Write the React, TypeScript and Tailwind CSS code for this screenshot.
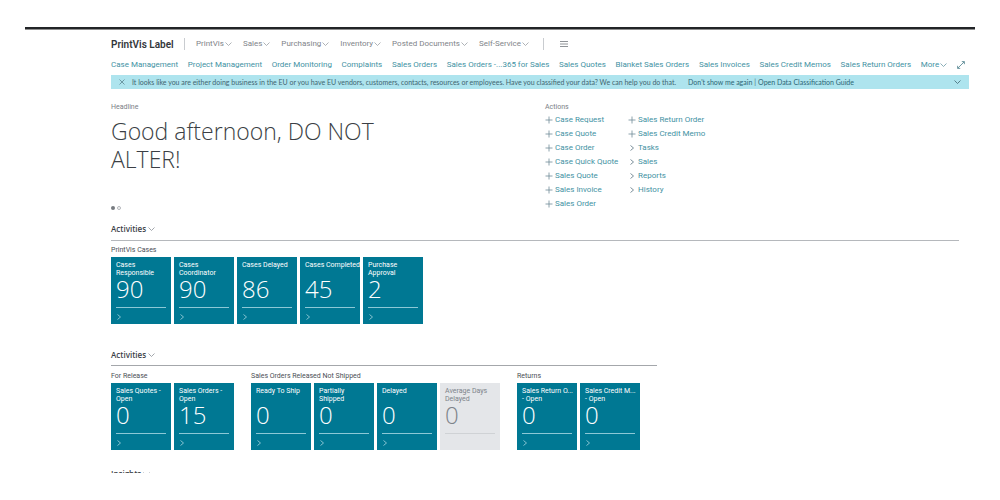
import { clsx } from "clsx";

const MENUS = ["PrintVis", "Sales", "Purchasing", "Inventory", "Posted Documents", "Self-Service"];

const LINKS = [
  "Case Management",
  "Project Management",
  "Order Monitoring",
  "Complaints",
  "Sales Orders",
  "Sales Orders -...365 for Sales",
  "Sales Quotes",
  "Blanket Sales Orders",
  "Sales Invoices",
  "Sales Credit Memos",
  "Sales Return Orders",
];

const CREATE_ACTIONS = [
  "Case Request",
  "Case Quote",
  "Case Order",
  "Case Quick Quote",
  "Sales Quote",
  "Sales Invoice",
  "Sales Order",
];

const MORE_ACTIONS = [
  { label: "Sales Return Order", icon: "plus" },
  { label: "Sales Credit Memo", icon: "plus" },
  { label: "Tasks", icon: "chevron" },
  { label: "Sales", icon: "chevron" },
  { label: "Reports", icon: "chevron" },
  { label: "History", icon: "chevron" },
];

type Cue = { lines: string[]; value: number; muted?: boolean };

const CASES: Cue[] = [
  { lines: ["Cases", "Responsible"], value: 90 },
  { lines: ["Cases", "Coordinator"], value: 90 },
  { lines: ["Cases Delayed"], value: 86 },
  { lines: ["Cases Completed"], value: 45 },
  { lines: ["Purchase", "Approval"], value: 2 },
];

const RELEASE: Cue[] = [
  { lines: ["Sales Quotes -", "Open"], value: 0 },
  { lines: ["Sales Orders -", "Open"], value: 15 },
];

const NOT_SHIPPED: Cue[] = [
  { lines: ["Ready To Ship"], value: 0 },
  { lines: ["Partially", "Shipped"], value: 0 },
  { lines: ["Delayed"], value: 0 },
  { lines: ["Average Days", "Delayed"], value: 0, muted: true },
];

const RETURNS: Cue[] = [
  { lines: ["Sales Return O...", "- Open"], value: 0 },
  { lines: ["Sales Credit M...", "- Open"], value: 0 },
];

function Down({ className }: { className?: string }) {
  return (
    <svg viewBox="0 0 7 4" className={clsx("h-1 w-[7px] shrink-0", className)} fill="none" stroke="currentColor" strokeWidth="0.8">
      <path d="M0.5 0.5 3.5 3.5 6.5 0.5" />
    </svg>
  );
}

function Right({ className }: { className?: string }) {
  return (
    <svg viewBox="0 0 4 6" className={clsx("h-[6px] w-1 shrink-0", className)} fill="none" stroke="currentColor" strokeWidth="0.8">
      <path d="M0.5 0.5 3.5 3 0.5 5.5" />
    </svg>
  );
}

function Plus() {
  return (
    <svg viewBox="0 0 8 8" className="size-2 shrink-0 text-[#6f8b98]" fill="none" stroke="currentColor" strokeWidth="0.8">
      <path d="M4 0.5V7.5M0.5 4H7.5" />
    </svg>
  );
}

function ActionLink({ label, icon }: { label: string; icon: string }) {
  return (
    <li>
      <a href="#" className="flex h-[14px] items-center gap-[2px] whitespace-nowrap">
        <span className="flex w-2 justify-center">
          {icon === "plus" ? <Plus /> : <Right className="text-[#5b7480]" />}
        </span>
        {label}
      </a>
    </li>
  );
}

function Tile({ lines, value, muted }: Cue) {
  return (
    <button
      type="button"
      className={clsx(
        "flex h-[67px] w-[60px] flex-col px-[5px] pt-1 text-left",
        muted ? "bg-[#e4e6e9] text-[#7d8389]" : "bg-[#007893] text-white",
      )}
    >
      <span className="h-4 text-[7px] leading-2 whitespace-nowrap">
        {lines.map((line) => (
          <span key={line} className="block">{line}</span>
        ))}
      </span>
      <span className="h-[30px] font-['Open_Sans',sans-serif] text-[24px] leading-6 font-light">{value}</span>
      <span className={clsx("block h-px w-full", muted ? "bg-[#cfd2d5]" : "bg-[#8cc8d6]")} />
      {!muted && <Right className="mt-[6px] ml-px text-[#a5d4df]" />}
    </button>
  );
}

function CueGroup({ title, cues }: { title: string; cues: Cue[] }) {
  return (
    <div>
      <h3 className="h-[14px] text-[7px] leading-[14px] whitespace-nowrap text-[#4a4f55]">{title}</h3>
      <div className="flex gap-[3px]">
        {cues.map((cue) => (
          <Tile key={cue.lines.join(" ")} {...cue} />
        ))}
      </div>
    </div>
  );
}

function SectionTitle({ children }: { children: string }) {
  return (
    <button
      type="button"
      className="flex h-4 items-center gap-[2px] font-['Open_Sans',sans-serif] text-[8px] font-semibold text-[#3c4248]"
    >
      {children}
      <Down className="text-[#8b9197]" />
    </button>
  );
}

export default function App() {
  return (
    <div className="min-h-screen bg-white px-[25px] pt-[27px] font-['Roboto','Open_Sans',sans-serif] text-[8px] text-[#3f92a3]">
      <div className="h-[3px] border-b border-[#8e8e8e] bg-[#222427]" />

      <div className="pr-[6px] pl-[86px]">
        {/* Top menu */}
        <header className="flex h-7 items-center text-[#7f8489]">
          <h1 className="w-[73px] text-[10px] font-semibold whitespace-nowrap text-[#33373b]">PrintVis Label</h1>
          <span className="h-3 w-px bg-[#c9ccd0]" />
          <nav className="ml-[11px] flex gap-[11px]">
            {MENUS.map((menu) => (
              <button key={menu} type="button" className="flex items-center gap-px whitespace-nowrap">
                {menu}
                <Down className="text-[#9a9fa5]" />
              </button>
            ))}
          </nav>
          <span className="ml-[14px] h-3 w-px bg-[#c9ccd0]" />
          <button type="button" aria-label="All menus" className="ml-4">
            <svg viewBox="0 0 8 6" className="h-[6px] w-2" stroke="#74797e" strokeWidth="0.8">
              <path d="M0 0.5H8M0 3H8M0 5.5H8" />
            </svg>
          </button>
        </header>

        {/* Page links */}
        <nav className="flex h-[17px] items-center justify-between pb-[3px] whitespace-nowrap">
          {LINKS.map((link) => (
            <a key={link} href="#">{link}</a>
          ))}
          <button type="button" className="flex items-center gap-px">
            More
            <Down className="text-[#6d9aa6]" />
          </button>
          <button type="button" aria-label="Expand" className="mr-1">
            <svg viewBox="0 0 8 8" className="size-2" fill="none" stroke="#4b7f8c" strokeWidth="0.8">
              <path d="M0.8 7.2 7.2 0.8M4.8 0.6H7.4V3.2M0.6 4.8V7.4H3.2" />
            </svg>
          </button>
        </nav>

        {/* Notification */}
        <div className="flex h-[14px] items-center bg-[#aee4ee] px-2 font-['Lato','Roboto',sans-serif] text-[7px] whitespace-nowrap text-[#3f6470]">
          <button type="button" aria-label="Dismiss" className="mr-[7px]">
            <svg viewBox="0 0 6 6" className="size-[6px]" stroke="#4f7884" strokeWidth="0.7">
              <path d="M0.5 0.5 5.5 5.5M5.5 0.5 0.5 5.5" />
            </svg>
          </button>
          <p>
            It looks like you are either doing business in the EU or you have EU vendors, customers, contacts, resources
            or employees. Have you classified your data? We can help you do that.
          </p>
          <a href="#" className="ml-3 text-[#2c6675]">Don't show me again</a>
          <span className="mx-[2px]">|</span>
          <a href="#" className="text-[#2c6675]">Open Data Classification Guide</a>
          <Down className="ml-auto text-[#3f6470]" />
        </div>

        <main className="pr-[10px]">
          {/* Headline and actions */}
          <div className="flex h-[132px] pt-3">
            <section className="w-[434px] shrink-0">
              <p className="h-[14px] text-[7px] leading-3 text-[#7b8086]">Headline</p>
              <h2 className="h-[90px] w-[300px] pt-[2px] font-['Open_Sans',sans-serif] text-[23px] leading-7 font-light text-[#3b3f45]">
                Good afternoon, DO NOT ALTER!
              </h2>
              <div className="flex gap-[2px] pt-px">
                <span className="size-1 rounded-full bg-[#777b80]" />
                <span className="size-1 rounded-full border border-[#b4b7bb]" />
              </div>
            </section>
            <section>
              <h2 className="h-3 text-[7px] leading-3 text-[#7b8086]">Actions</h2>
              <div className="flex">
                <ul className="w-[83px]">
                  {CREATE_ACTIONS.map((label) => (
                    <ActionLink key={label} label={label} icon="plus" />
                  ))}
                </ul>
                <ul>
                  {MORE_ACTIONS.map((action) => (
                    <ActionLink key={action.label} {...action} />
                  ))}
                </ul>
              </div>
            </section>
          </div>

          <section className="h-[126px]">
            <SectionTitle>Activities</SectionTitle>
            <div className="mt-[3px] mb-[2px] h-px bg-[#b5b8bc]" />
            <CueGroup title="PrintVis Cases" cues={CASES} />
          </section>

          <section className="h-[115px]">
            <SectionTitle>Activities</SectionTitle>
            <div className="mt-[2px] mb-[3px] h-px w-[546px] bg-[#a4a7ab]" />
            <div className="flex gap-[17px]">
              <CueGroup title="For Release" cues={RELEASE} />
              <CueGroup title="Sales Orders Released Not Shipped" cues={NOT_SHIPPED} />
              <CueGroup title="Returns" cues={RETURNS} />
            </div>
          </section>

          <section className="mt-1 h-[7px] overflow-hidden">
            <SectionTitle>Insights</SectionTitle>
          </section>
        </main>
      </div>
    </div>
  );
}
